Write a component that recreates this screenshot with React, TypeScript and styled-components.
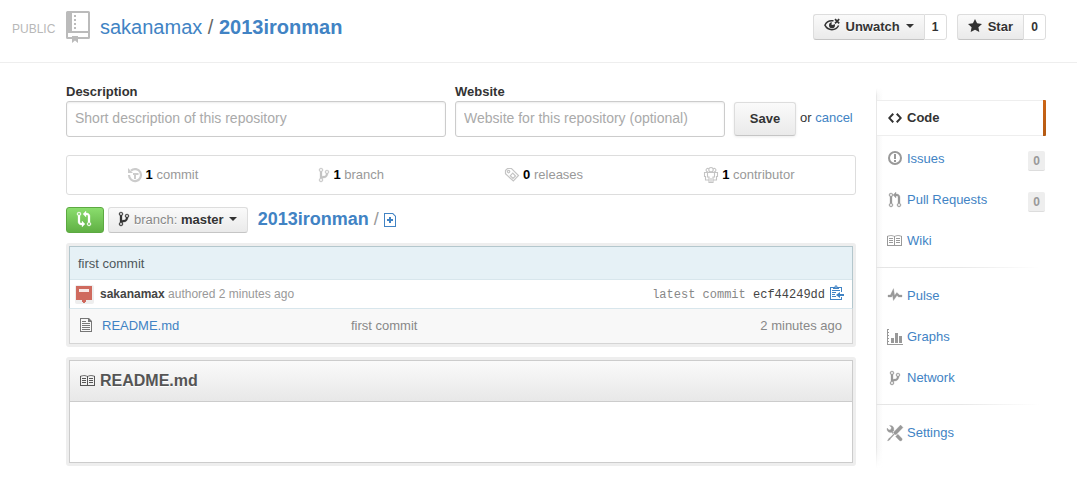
import React from 'react';
import styled, { createGlobalStyle, css } from 'styled-components';

const GlobalStyle = createGlobalStyle`
  *, *::before, *::after { box-sizing: border-box; }
  body {
    margin: 0;
    background: #fff;
    color: #333;
    font: 13px/18px "Liberation Sans", Arial, sans-serif;
  }
  a { color: #4183c4; text-decoration: none; }
  a:hover { text-decoration: underline; }
  button, input { font-family: inherit; margin: 0; }
`;

/* ---------- icons ---------- */

const Glyph = styled.svg<{ $color?: string }>`
  display: block;
  flex: none;
  overflow: visible;
  fill: ${(p) => p.$color ?? 'currentColor'};
  color: ${(p) => p.$color ?? 'inherit'};
`;

type IconProps = { color?: string };

const BRANCH =
  'M10 5c0-1.11-.89-2-2-2a1.993 1.993 0 0 0-1 3.72v.3c-.02.52-.23.98-.63 1.38-.4.4-.86.61-1.38.63-.83.02-1.48.16-2 .45V4.72a1.993 1.993 0 0 0-1-3.72C.88 1 0 1.89 0 3a2 2 0 0 0 1 1.72v6.56c-.59.35-1 .99-1 1.72 0 1.11.89 2 2 2 1.11 0 2-.89 2-2 0-.53-.2-1-.53-1.36.09-.06.48-.41.59-.47.25-.11.56-.17.94-.17 1.05-.05 1.95-.45 2.75-1.25S8.95 7.77 9 6.73h-.02C9.59 6.37 10 5.73 10 5zM2 1.8c.66 0 1.2.55 1.2 1.2 0 .65-.55 1.2-1.2 1.2C1.35 4.2.8 3.65.8 3c0-.65.55-1.2 1.2-1.2zm0 12.41c-.66 0-1.2-.55-1.2-1.2 0-.65.55-1.2 1.2-1.2.65 0 1.2.55 1.2 1.2 0 .65-.55 1.2-1.2 1.2zm6-8c-.66 0-1.2-.55-1.2-1.2 0-.65.55-1.2 1.2-1.2.65 0 1.2.55 1.2 1.2 0 .65-.55 1.2-1.2 1.2z';
const PULL =
  'M11 11.28V5c-.03-.78-.34-1.47-.94-2.06C9.46 2.35 8.78 2.03 8 2H7V0L4 3l3 3V4h1c.27.02.48.11.69.31.21.2.3.42.31.69v6.28A1.993 1.993 0 0 0 10 15a1.993 1.993 0 0 0 1-3.72zm-1 2.92c-.66 0-1.2-.55-1.2-1.2 0-.65.55-1.2 1.2-1.2.65 0 1.2.55 1.2 1.2 0 .65-.55 1.2-1.2 1.2zM4 3c0-1.11-.89-2-2-2a1.993 1.993 0 0 0-1 3.72v6.56A1.993 1.993 0 0 0 2 15a1.993 1.993 0 0 0 1-3.72V4.72c.59-.34 1-.98 1-1.72zm-.8 10c0 .66-.55 1.2-1.2 1.2-.65 0-1.2-.55-1.2-1.2 0-.65.55-1.2 1.2-1.2.65 0 1.2.55 1.2 1.2zM2 4.2C1.34 4.2.8 3.65.8 3c0-.65.55-1.2 1.2-1.2.65 0 1.2.55 1.2 1.2 0 .65-.55 1.2-1.2 1.2z';
const COMPARE =
  'M5 12H4c-.27-.02-.48-.11-.69-.31-.21-.2-.3-.42-.31-.69V4.72A1.993 1.993 0 0 0 2 1a1.993 1.993 0 0 0-1 3.72V11c.03.78.34 1.47.94 2.06.6.59 1.28.91 2.06.94h1v2l3-3-3-3v2zM2 1.8c.66 0 1.2.55 1.2 1.2 0 .65-.55 1.2-1.2 1.2C1.35 4.2.8 3.65.8 3c0-.65.55-1.2 1.2-1.2zm11 9.48V5c-.03-.78-.34-1.47-.94-2.06-.6-.59-1.28-.91-2.06-.94H9V0L6 3l3 3V4h1c.27.02.48.11.69.31.21.2.3.42.31.69v6.28A1.993 1.993 0 0 0 12 15a1.993 1.993 0 0 0 1-3.72zm-1 2.92c-.66 0-1.2-.55-1.2-1.2 0-.65.55-1.2 1.2-1.2.65 0 1.2.55 1.2 1.2 0 .65-.55 1.2-1.2 1.2z';
const TOOLS =
  'M4.48 7.27c.26.26 1.28 1.33 1.28 1.33l.56-.58-.88-.91 1.69-1.8s-.76-.74-.43-.45c.32-1.19.03-2.51-.87-3.44C4.93.5 3.66.2 2.52.51l1.93 2-.51 1.96-1.89.52-1.93-1.99C-.19 4.17.1 5.48 1 6.4c.94.98 2.29 1.26 3.48.87zm6.44 1.94l-2.33 2.3 3.84 3.98c.31.33.73.49 1.14.49.41 0 .82-.16 1.14-.49.63-.65.63-1.7 0-2.35l-3.79-3.93zM16 2.53L13.55 0 6.33 7.46l.88.91-4.31 4.46-.99.53-1.39 2.27.35.37 2.2-1.44.51-1.02L7.9 9.08l.88.91L16 2.53z';

const RepoIcon = () => (
  <Glyph $color="#bbb" width="24" height="32" viewBox="0 0 24 32" aria-hidden>
    <path
      fillRule="evenodd"
      d="M1.5 0h21A1.5 1.5 0 0 1 24 1.500v25A1.500 1.500 0 0 1 22.500 28h-21A1.500 1.500 0 0 1 0 26.500v-25A1.500 1.500 0 0 1 1.500 0zM6 2v18h16V2zM2 22v4h20v-4z"
    />
    <path d="M8 4h2v2H8zM8 8h2v2H8zM8 12h2v2H8zM8 16h2v2H8zM6 25h6v7l-3-2.500L6 32z" />
  </Glyph>
);

const EyeIcon = () => (
  <Glyph width="16" height="16" viewBox="0 0 16 16" aria-hidden>
    <path
      d="M9.500 2.800C5 2.200 2 4.500.9 7.200c1.400 2.700 3.900 4.500 7 4.500 3 0 5.300-1.500 6.700-4.200"
      fill="none"
      stroke="currentColor"
      strokeWidth="1.500"
    />
    <path fillRule="evenodd" d="M8 4.200A3 3 0 1 0 11 7.400L10.800 6 8.800 7 7.300 6.600z" />
    <path d="M11 1.200l4.200 4.200M15.200 1.200L11 5.400" fill="none" stroke="currentColor" strokeWidth="1.700" />
  </Glyph>
);

const StarIcon = () => (
  <Glyph width="14" height="16" viewBox="0 0 14 16" aria-hidden>
    <path d="M14 6l-4.900-.64L7 1 4.900 5.360 0 6l3.600 3.260L2.670 14 7 11.670 11.330 14l-.93-4.740z" />
  </Glyph>
);

const CaretIcon = () => (
  <Glyph width="8" height="4" viewBox="0 0 8 4" aria-hidden>
    <path d="M0 0h8L4 4z" />
  </Glyph>
);

const HistoryIcon = ({ color }: IconProps) => (
  <Glyph $color={color} width="14" height="16" viewBox="0 0 14 16" aria-hidden>
    <path d="M3 3.600A6 6 0 1 1 1 8" fill="none" stroke="currentColor" strokeWidth="2.200" />
    <path d="M0 1l5 5H0zM5 6h5.500v2H8v4H6V8H5z" />
  </Glyph>
);

const BranchIcon = ({ color }: IconProps) => (
  <Glyph $color={color} width="10" height="16" viewBox="0 0 10 16" aria-hidden>
    <path d={BRANCH} stroke="currentColor" strokeWidth=".3" />
  </Glyph>
);

const TagIcon = ({ color }: IconProps) => (
  <Glyph $color={color} width="14" height="16" viewBox="0 0 14 16" aria-hidden>
    <g fill="none" stroke="currentColor" strokeWidth="1.200">
      <path d="M.5 3.500L2.500 1.500h4l7 7-5.200 5.500L.5 6.800z" />
      <path d="M7.800 6.200L10.500 9 8 11.500 5.300 8.700z" />
      <circle cx="3.600" cy="4.600" r="1.200" />
    </g>
  </Glyph>
);

const PeopleIcon = ({ color }: IconProps) => (
  <Glyph $color={color} width="14" height="16" viewBox="0 0 14 16" aria-hidden>
    <g fill="none" stroke="currentColor" strokeWidth="1.100">
      <circle cx="7" cy="2.700" r="2.200" />
      <path d="M4.800 1.700a1.700 1.700 0 1 0-.6 3M9.200 1.700a1.700 1.700 0 1 1 .6 3" />
      <path d="M3.500 5.500h7v4.500h-1.500v5.500H5V10H3.500zM7 11v4M3.500 5.500H.5v4h1V13H5M10.500 5.500h3v4h-1V13H9" />
    </g>
  </Glyph>
);

const CompareIcon = () => (
  <Glyph $color="#fff" width="14" height="16" viewBox="0 0 14 16" aria-hidden>
    <path d={COMPARE} stroke="currentColor" strokeWidth=".3" />
  </Glyph>
);

const FilePlusIcon = () => (
  <Glyph width="12" height="14" viewBox="0 0 12 14" aria-hidden>
    <path fillRule="evenodd" d="M0 0h9l3 3v11H0zM1 1v12h10V3.500L8.500 1z" />
    <path d="M5 4h2v2h2v2H7v2H5V8H3V6h2z" />
  </Glyph>
);

const FileTextIcon = () => (
  <Glyph $color="#777" width="12" height="14" viewBox="0 0 12 14" aria-hidden>
    <path fillRule="evenodd" d="M0 0h9l3 3v11H0zM1 1v12h10V4H8V1z" />
    <path d="M2 3h4v1H2zM2 5h8v1H2zM2 7h8v1H2zM2 9h8v1H2zM2 11h8v1H2z" />
  </Glyph>
);

const ClipboardIcon = () => (
  <Glyph width="14" height="16" viewBox="0 0 14 16" aria-hidden>
    <path d="M0 2h3v1H1v11h10v-2h1v3H0zM9 2h3v5h-1V3H9zM2 5h8v1H2zM2 7h4v1H2zM2 9h3v1H2zM2 11h4v1H2z" />
    <path fillRule="evenodd" d="M3 4V2h1.500L5 .5h2L7.500 2H9v2zM5.500 1.500v1h1v-1z" />
    <path d="M6 10l4-3v2h4v2h-4v2z" />
  </Glyph>
);

const BookIcon = ({ color }: IconProps) => (
  <Glyph $color={color} width="16" height="16" viewBox="0 0 16 16" aria-hidden>
    <path
      fillRule="evenodd"
      d="M0 3C2 2 6 2 7.500 3 9 2 13 2 15 3v10H0zM1 3.500V12h6V3.500C5.500 2.800 2.500 2.800 1 3.500zM8 3.500V12h6V3.500c-1.500-.7-4.500-.7-6 0z"
    />
    <path d="M2 5h4v1H2zM2 7h4v1H2zM2 9h4v1H2zM9 5h4v1H9zM9 7h4v1H9zM9 9h4v1H9z" />
  </Glyph>
);

const CodeIcon = () => (
  <Glyph width="14" height="16" viewBox="0 0 14 16" aria-hidden>
    <path d="M9.500 3L8 4.500 11.500 8 8 11.500 9.500 13 14 8 9.500 3zm-5 0L0 8l4.500 5L6 11.500 2.500 8 6 4.500 4.500 3z" />
  </Glyph>
);

const IssueIcon = () => (
  <Glyph $color="#999" width="14" height="16" viewBox="0 0 14 16" aria-hidden>
    <circle cx="7" cy="7" r="6" fill="none" stroke="currentColor" strokeWidth="2" />
    <path d="M6 3h2v5H6zM6 9h2v2H6z" />
  </Glyph>
);

const PullIcon = () => (
  <Glyph $color="#999" width="12" height="16" viewBox="0 0 12 16" aria-hidden>
    <path d={PULL} stroke="currentColor" strokeWidth=".3" />
  </Glyph>
);

const PulseIcon = () => (
  <Glyph $color="#999" width="14" height="16" viewBox="0 0 14 16" aria-hidden>
    <path
      d="M11.500 7L8.800 4.400 6.600 7.500 5.500.6 2.380 7H0v2h3.600l.9-1.800.9 5.400L9 7.500l1.600 1.500H14V7h-2.500z"
      stroke="currentColor"
      strokeWidth=".3"
    />
  </Glyph>
);

const GraphIcon = () => (
  <Glyph $color="#999" width="16" height="16" viewBox="0 0 16 16" aria-hidden>
    <path d="M0 0h2v1H1v2h1v1H1v2h1v1H1v2h1v1H1v2h1v1H1v2h15v1H0zM4 9h3v5H4zM8 4h3v10H8zM12 7h3v7h-3z" />
  </Glyph>
);

const ToolsIcon = () => (
  <Glyph $color="#999" width="16" height="16" viewBox="0 0 16 16" aria-hidden>
    <path d={TOOLS} stroke="currentColor" strokeWidth=".3" />
  </Glyph>
);

const Avatar = () => (
  <Glyph width="19" height="19" viewBox="0 0 19 19" role="img" aria-label="sakanamax avatar">
    <rect width="19" height="19" rx="2" fill="#eee" />
    <path fill="#cf6a5e" d="M1 1h16v14h-6v2h-1v1H8v-1H7v-2H1z" />
    <path fill="#f7e9e7" d="M4 4h10v3H4z" />
  </Glyph>
);

/* ---------- page header ---------- */

const PageHead = styled.header`
  display: flex;
  align-items: flex-start;
  justify-content: space-between;
  min-height: 63px;
  padding: 11px 31px 0 12px;
  border-bottom: 1px solid #eee;
`;

const RepoTitle = styled.div`
  display: flex;
  align-items: flex-start;
`;

const Visibility = styled.span`
  width: 54px;
  color: #b8b8b8;
  font-size: 12px;
  line-height: 36px;
`;

const RepoName = styled.h1`
  margin: 0 0 0 10px;
  color: #666;
  font-size: 20px;
  font-weight: normal;
  line-height: 32px;
`;

const Actions = styled.div`
  display: flex;
  gap: 10px;
  padding-top: 3px;
`;

const Social = styled.div`
  display: flex;
`;

const raised = css`
  border: 1px solid #ddd;
  border-bottom-color: #c5c5c5;
  border-radius: 3px;
  background: linear-gradient(#fafafa, #eaeaea);
  color: #333;
  font-size: 13px;
  font-weight: bold;
  cursor: pointer;
`;

const Button = styled.button<{ $joined?: boolean }>`
  ${raised}
  display: flex;
  align-items: center;
  gap: 5px;
  height: 26px;
  padding: 0 10px 2px;
  ${(p) => p.$joined && 'gap: 6px; border-right: 0; border-radius: 3px 0 0 3px;'}
`;

const ButtonText = styled.span<{ $light?: boolean }>`
  color: ${(p) => (p.$light ? '#888' : '#333')};
  font-weight: ${(p) => (p.$light ? 'normal' : 'bold')};
  text-shadow: 0 1px 0 rgba(255, 255, 255, 0.9);
`;

const SocialCount = styled.a`
  width: 23px;
  height: 26px;
  border: 1px solid #ddd;
  border-radius: 0 3px 3px 0;
  color: #333;
  font-size: 12px;
  font-weight: bold;
  line-height: 24px;
  text-align: center;
`;

/* ---------- layout ---------- */

const Page = styled.main`
  display: grid;
  grid-template-columns: minmax(0, 1fr) 170px;
  column-gap: 20px;
  align-items: start;
  padding: 20px 31px 20px 66px;
`;

const Content = styled.div`
  display: flex;
  flex-direction: column;
`;

/* ---------- description form ---------- */

const MetaForm = styled.form`
  display: flex;
  gap: 9px;
`;

const Field = styled.label<{ $grow: number }>`
  display: block;
  flex: ${(p) => p.$grow} 1 0;
  min-width: 0;
  font-weight: bold;
`;

const TextInput = styled.input`
  display: block;
  width: 100%;
  height: 36px;
  padding: 0 8px 2px;
  border: 1px solid #ccc;
  border-radius: 3px;
  background: #fff;
  box-shadow: inset 0 1px 2px rgba(0, 0, 0, 0.08);
  color: #333;
  font-size: 14px;
  &::placeholder { color: #aaa; opacity: 1; }
`;

const FormActions = styled.div`
  display: flex;
  flex: 0 0 122px;
  align-items: center;
  align-self: flex-end;
  gap: 4px;
  height: 36px;
  white-space: nowrap;
`;

const SaveButton = styled.button`
  ${raised}
  width: 62px;
  height: 34px;
  padding: 0 0 2px;
  box-shadow: 0 1px 3px rgba(0, 0, 0, 0.08);
`;

const CancelHint = styled.span`
  padding-bottom: 2px;
`;

/* ---------- numbers bar ---------- */

const Stats = styled.ul`
  display: flex;
  height: 40px;
  margin: 18px 0 12px;
  padding: 0;
  border: 1px solid #ddd;
  border-radius: 3px;
  list-style: none;
`;

const Stat = styled.li`
  display: flex;
  flex: 1 1 auto;
  align-items: center;
  justify-content: center;
`;

const StatLink = styled.a`
  display: flex;
  align-items: center;
  gap: 4px;
  color: #999;
  strong { color: #000; }
`;

/* ---------- branch toolbar ---------- */

const Toolbar = styled.div`
  display: flex;
  align-items: center;
  gap: 4px;
  height: 26px;
  margin-bottom: 10px;
`;

const CompareButton = styled.button`
  display: flex;
  align-items: center;
  justify-content: center;
  width: 38px;
  height: 26px;
  padding: 0 2px 2px 0;
  border: 1px solid #5ca941;
  border-radius: 3px;
  background: linear-gradient(#8add6d, #60b044);
  cursor: pointer;
`;

const Breadcrumb = styled.div`
  display: flex;
  align-items: center;
  gap: 5px;
  margin-left: 6px;
  color: #999;
  font-size: 18px;
  line-height: 24px;
`;

const Crumb = styled.span`
  padding-bottom: 2px;
`;

/* ---------- bubbles ---------- */

const Bubble = styled.section`
  padding: 3px;
  border-radius: 3px;
  background: #eee;
  & + & { margin-top: 10px; }
`;

const CommitBox = styled.div`
  border: 1px solid #b4c7cd;
  border-bottom-color: #d8e6ec;
  background: #fff;
`;

const CommitTitle = styled.p`
  margin: 0;
  padding: 8px 8px 6px;
  border-bottom: 1px solid #d8e6ec;
  background: #e6f1f6;
  color: #4e575b;
`;

const CommitMeta = styled.div`
  display: flex;
  align-items: center;
  justify-content: space-between;
  height: 28px;
  padding: 0 8px 0 5px;
  font-size: 12px;
`;

const Authorship = styled.div`
  display: flex;
  align-items: center;
  gap: 6px;
  color: #999;
  a { color: #444; font-weight: bold; }
`;

const Sha = styled.div`
  display: flex;
  align-items: center;
  gap: 5px;
  color: #888;
  font-family: "Liberation Mono", monospace;
  a { color: #444; }
`;

const ShaText = styled.span`
  padding-top: 2px;
`;

const IconButton = styled.button`
  padding: 0 0 2px;
  border: 0;
  background: none;
  color: #4183c4;
  cursor: pointer;
`;

const FileTable = styled.table`
  width: 100%;
  border: 1px solid #d5d5d5;
  border-top: 0;
  border-collapse: separate;
  border-spacing: 0;
  background: #f8f8f8;
`;

const Cell = styled.td<{ $width?: string; $right?: boolean }>`
  width: ${(p) => p.$width ?? 'auto'};
  height: 34px;
  padding: 0 10px;
  color: #888;
  text-align: ${(p) => (p.$right ? 'right' : 'left')};
  &:first-child { padding: 0 0 2px 10px; }
`;

const ReadmeBox = styled.div`
  border: 1px solid #ccc;
  background: #fff;
`;

const ReadmeTitle = styled.h2`
  display: flex;
  align-items: center;
  gap: 4px;
  height: 41px;
  margin: 0;
  padding: 0 10px;
  border-bottom: 1px solid #ccc;
  background: linear-gradient(#fafafa, #e8e8e8);
  color: #555;
  font-size: 16px;
  text-shadow: 0 1px 0 #fff;
`;

const ReadmeBody = styled.article`
  padding: 30px;
`;

/* ---------- side navigation ---------- */

const SideNav = styled.nav`
  position: relative;
  margin-top: 5px;
  padding-bottom: 9px;
  &::before {
    content: '';
    position: absolute;
    inset: 0 auto 0 0;
    width: 7px;
    border-left: 1px solid #e8e8e8;
    background: linear-gradient(90deg, #f6f6f6, rgba(255, 255, 255, 0));
    mask-image: linear-gradient(transparent, #000 8px, #000 calc(100% - 20px), transparent);
  }
`;

const NavGroup = styled.ul`
  position: relative;
  display: flex;
  flex-direction: column;
  gap: 5px;
  margin: 0;
  padding: 10px 0 8px 1px;
  list-style: none;
  &:first-child { padding-top: 12px; }
  & + & {
    border-top: 1px solid;
    border-image: linear-gradient(90deg, #e5e5e5, #e8e8e8 50%, rgba(255, 255, 255, 0) 96%) 1;
  }
`;

const NavLink = styled.a<{ $selected?: boolean }>`
  display: flex;
  align-items: center;
  height: 36px;
  padding: 0 1px 0 10px;
  ${(p) =>
    p.$selected &&
    css`
      position: relative;
      border: solid #eee;
      border-width: 1px 0;
      background: #fff;
      color: #333;
      font-weight: bold;
      &::after {
        content: '';
        position: absolute;
        inset: -1px 0 -1px auto;
        width: 3px;
        border-radius: 0 1px 1px 0;
        background: linear-gradient(#cc6516, #b45a13);
      }
    `}
`;

const NavIcon = styled.span`
  display: flex;
  justify-content: center;
  width: 16px;
  margin-right: 4px;
`;

const Counter = styled.span`
  margin: 3px 0 0 auto;
  padding: 1px 5px 0;
  border-bottom: 1px solid #ddd;
  border-radius: 2px;
  background: #eee;
  color: #999;
  font-size: 12px;
  font-weight: bold;
  line-height: 18px;
`;

type NavEntry = { label: string; icon: React.ReactNode; count?: number; selected?: boolean };

const NAV: NavEntry[][] = [
  [
    { label: 'Code', icon: <CodeIcon />, selected: true },
    { label: 'Issues', icon: <IssueIcon />, count: 0 },
    { label: 'Pull Requests', icon: <PullIcon />, count: 0 },
    { label: 'Wiki', icon: <BookIcon color="#999" /> },
  ],
  [
    { label: 'Pulse', icon: <PulseIcon /> },
    { label: 'Graphs', icon: <GraphIcon /> },
    { label: 'Network', icon: <BranchIcon color="#999" /> },
  ],
  [{ label: 'Settings', icon: <ToolsIcon /> }],
];

const STATS = [
  { icon: <HistoryIcon color="#ccc" />, value: 1, label: 'commit' },
  { icon: <BranchIcon color="#c4c4c4" />, value: 1, label: 'branch' },
  { icon: <TagIcon color="#c4c4c4" />, value: 0, label: 'releases' },
  { icon: <PeopleIcon color="#c4c4c4" />, value: 1, label: 'contributor' },
];

export default function App() {
  return (
    <>
      <GlobalStyle />
      <PageHead>
        <RepoTitle>
          <Visibility>PUBLIC</Visibility>
          <RepoIcon />
          <RepoName>
            <a href="#owner">sakanamax</a> / <a href="#repo"><strong>2013ironman</strong></a>
          </RepoName>
        </RepoTitle>
        <Actions>
          <Social>
            <Button $joined type="button">
              <EyeIcon />
              <ButtonText>Unwatch</ButtonText>
              <CaretIcon />
            </Button>
            <SocialCount href="#watchers">1</SocialCount>
          </Social>
          <Social>
            <Button $joined type="button">
              <StarIcon />
              <ButtonText>Star</ButtonText>
            </Button>
            <SocialCount href="#stargazers">0</SocialCount>
          </Social>
        </Actions>
      </PageHead>

      <Page>
        <Content>
          <MetaForm onSubmit={(e) => e.preventDefault()}>
            <Field $grow={38}>
              Description
              <TextInput type="text" placeholder="Short description of this repository" />
            </Field>
            <Field $grow={27}>
              Website
              <TextInput type="text" placeholder="Website for this repository (optional)" />
            </Field>
            <FormActions>
              <SaveButton type="submit">Save</SaveButton>
              <CancelHint>
                or <a href="#cancel">cancel</a>
              </CancelHint>
            </FormActions>
          </MetaForm>

          <Stats>
            {STATS.map((s) => (
              <Stat key={s.label}>
                <StatLink href={`#${s.label}`}>
                  {s.icon}
                  <span>
                    <strong>{s.value}</strong> {s.label}
                  </span>
                </StatLink>
              </Stat>
            ))}
          </Stats>

          <Toolbar>
            <CompareButton type="button" aria-label="Compare and review">
              <CompareIcon />
            </CompareButton>
            <Button type="button">
              <BranchIcon color="#333" />
              <span>
                <ButtonText $light>branch:</ButtonText> <ButtonText>master</ButtonText>
              </span>
              <CaretIcon />
            </Button>
            <Breadcrumb>
              <Crumb><a href="#root"><strong>2013ironman</strong></a></Crumb>
              <Crumb>/</Crumb>
              <a href="#new" aria-label="Create a new file"><FilePlusIcon /></a>
            </Breadcrumb>
          </Toolbar>

          <Bubble>
            <CommitBox>
              <CommitTitle>first commit</CommitTitle>
              <CommitMeta>
                <Authorship>
                  <Avatar />
                  <span>
                    <a href="#author">sakanamax</a> authored 2 minutes ago
                  </span>
                </Authorship>
                <Sha>
                  <ShaText>
                    latest commit <a href="#sha">ecf44249dd</a>
                  </ShaText>
                  <IconButton type="button" aria-label="Copy SHA">
                    <ClipboardIcon />
                  </IconButton>
                </Sha>
              </CommitMeta>
            </CommitBox>
            <FileTable>
              <tbody>
                <tr>
                  <Cell $width="22px"><FileTextIcon /></Cell>
                  <Cell $width="249px"><a href="#readme">README.md</a></Cell>
                  <Cell>first commit</Cell>
                  <Cell $right>2 minutes ago</Cell>
                </tr>
              </tbody>
            </FileTable>
          </Bubble>

          <Bubble id="readme">
            <ReadmeBox>
              <ReadmeTitle>
                <BookIcon color="#555" />
                README.md
              </ReadmeTitle>
              <ReadmeBody />
            </ReadmeBox>
          </Bubble>
        </Content>

        <SideNav aria-label="Repository">
          {NAV.map((group) => (
            <NavGroup key={group[0].label}>
              {group.map((item) => (
                <li key={item.label}>
                  <NavLink href={`#${item.label}`} $selected={item.selected}>
                    <NavIcon>{item.icon}</NavIcon>
                    {item.label}
                    {item.count !== undefined && <Counter>{item.count}</Counter>}
                  </NavLink>
                </li>
              ))}
            </NavGroup>
          ))}
        </SideNav>
      </Page>
    </>
  );
}
